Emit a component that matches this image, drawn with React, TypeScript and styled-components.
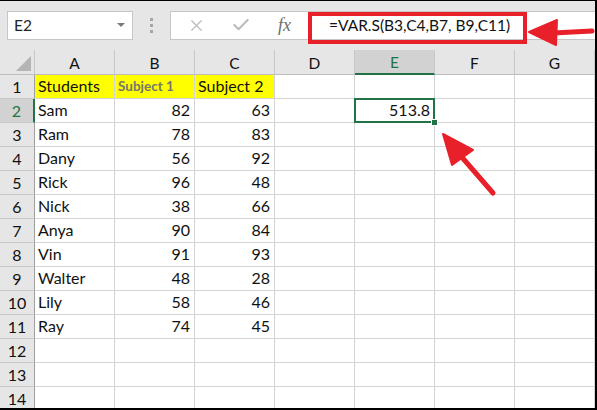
import styled, { createGlobalStyle } from 'styled-components'
import { X, Check } from 'lucide-react'

const GlobalStyle = createGlobalStyle`
  html, body {
    margin: 0;
    padding: 0;
    background: #ffffff;
  }
  body {
    font-family: Lato, 'Open Sans', sans-serif;
    overflow: hidden;
  }
`

const Window = styled.div`
  position: relative;
  width: 597px;
  height: 410px;
  box-sizing: border-box;
  border-top: 1px solid #000;
  border-right: 2px solid #000;
  border-bottom: 2px solid #000;
  background: #e6e6e6;
  overflow: hidden;
`

const Toolbar = styled.div`
  display: flex;
  align-items: center;
  height: 49px;
  padding: 9px 0 10px 7px;
  box-sizing: border-box;
`

const NameBox = styled.div`
  display: flex;
  align-items: center;
  justify-content: space-between;
  width: 126px;
  height: 29px;
  box-sizing: border-box;
  padding: 0 7px 0 6px;
  background: #fff;
  border: 1px solid #c6c6c6;
  font-size: 15.5px;
  color: #222;
`

const DropArrow = styled.span`
  width: 0;
  height: 0;
  border-left: 4px solid transparent;
  border-right: 4px solid transparent;
  border-top: 4px solid #7a7a7a;
`

const Dots = styled.div`
  display: flex;
  flex-direction: column;
  gap: 3px;
  margin: 0 17px 0 17px;
  span {
    width: 3px;
    height: 3px;
    background: #a6a6a6;
  }
`

const FormulaBar = styled.div`
  flex: 1;
  display: flex;
  align-items: center;
  height: 29px;
  box-sizing: border-box;
  background: #fff;
  border: 1px solid #c6c6c6;
  border-right: none;
  padding-left: 15px;
  color: #bcbcbc;
`

const IconSlot = styled.span`
  display: flex;
  align-items: center;
  justify-content: center;
  width: 20px;
  margin-right: 25px;
`

const Fx = styled.span`
  font-family: 'Liberation Serif', serif;
  font-style: italic;
  font-size: 18px;
  color: #6d6d6d;
  width: 20px;
  margin: 0 31px 0 2px;
`

const Formula = styled.span`
  font-size: 15.5px;
  color: #111;
`

const Sheet = styled.div`
  display: grid;
  grid-template-columns: 35px repeat(7, 80px);
  grid-auto-rows: 24px;
  grid-template-rows: 25px;
  background: #fff;
`

const Corner = styled.div`
  position: relative;
  background: #e6e6e6;
  border-right: 1px solid #c8c8c8;
  border-bottom: 1px solid #bdbdbd;
  &::after {
    content: '';
    position: absolute;
    right: 3px;
    bottom: 3px;
    width: 0;
    height: 0;
    border-left: 15px solid transparent;
    border-bottom: 15px solid #b4b4b4;
  }
`

const ColHeader = styled.div<{ $active?: boolean }>`
  display: flex;
  align-items: center;
  justify-content: center;
  box-sizing: border-box;
  background: ${p => (p.$active ? '#d2d2d2' : '#e6e6e6')};
  color: ${p => (p.$active ? '#217346' : '#111')};
  border-right: 1px solid #c8c8c8;
  border-bottom: ${p => (p.$active ? '2px solid #217346' : '1px solid #bdbdbd')};
  font-size: 15.5px;
  padding-top: 1px;
`

const RowHeader = styled.div<{ $active?: boolean }>`
  display: flex;
  align-items: center;
  justify-content: center;
  box-sizing: border-box;
  background: ${p => (p.$active ? '#d2d2d2' : '#e6e6e6')};
  color: ${p => (p.$active ? '#217346' : '#111')};
  border-right: ${p => (p.$active ? '2px solid #217346' : '1px solid #9f9f9f')};
  border-bottom: 1px solid #c8c8c8;
  font-size: 16px;
`

const Cell = styled.div<{ $align?: 'left' | 'right'; $fill?: string; $selected?: boolean }>`
  position: relative;
  display: flex;
  align-items: flex-end;
  justify-content: ${p => (p.$align === 'right' ? 'flex-end' : 'flex-start')};
  box-sizing: border-box;
  padding: 0 4px 2px 3px;
  background: ${p => p.$fill ?? '#fff'};
  border-right: 1px solid #d4d4d4;
  border-bottom: 1px solid #d4d4d4;
  font-size: 16px;
  line-height: 20px;
  color: #111;
  white-space: nowrap;
  ${p =>
    p.$selected &&
    `
    &::after {
      content: '';
      position: absolute;
      left: -1px;
      top: -1px;
      right: -1px;
      bottom: -1px;
      border: 2px solid #217346;
    }
    &::before {
      content: '';
      position: absolute;
      right: -4px;
      bottom: -4px;
      width: 5px;
      height: 5px;
      background: #217346;
      border: 1px solid #fff;
      z-index: 1;
    }
  `}
`

const Muted = styled.span`
  font-weight: 700;
  font-size: 13.5px;
  color: #76766a;
`

const Highlight = styled.div`
  position: absolute;
  left: 308px;
  top: 11px;
  width: 219px;
  height: 32px;
  box-sizing: border-box;
  border: 4px solid #e8202a;
  pointer-events: none;
`

const Overlay = styled.svg`
  position: absolute;
  left: 0;
  top: -1px;
  pointer-events: none;
`

const cols = ['A', 'B', 'C', 'D', 'E', 'F', 'G']

const data: [string, number, number][] = [
  ['Sam', 82, 63],
  ['Ram', 78, 83],
  ['Dany', 56, 92],
  ['Rick', 96, 48],
  ['Nick', 38, 66],
  ['Anya', 90, 84],
  ['Vin', 91, 93],
  ['Walter', 48, 28],
  ['Lily', 58, 46],
  ['Ray', 74, 45],
]

const YELLOW = '#ffff00'

const App = (): JSX.Element => {
  const rows: JSX.Element[] = []
  for (let r = 1; r <= 14; r++) {
    const rec = r >= 2 && r <= 11 ? data[r - 2] : null
    rows.push(<RowHeader key={`h${r}`} $active={r === 2}>{r}</RowHeader>)
    cols.forEach((c, i) => {
      const key = `${c}${r}`
      if (r === 1 && i < 3) {
        rows.push(
          <Cell key={key} $fill={YELLOW}>
            {i === 0 && 'Students'}
            {i === 1 && <Muted>Subject 1</Muted>}
            {i === 2 && 'Subject 2'}
          </Cell>
        )
      } else if (rec && i === 0) {
        rows.push(<Cell key={key}>{rec[0]}</Cell>)
      } else if (rec && (i === 1 || i === 2)) {
        rows.push(<Cell key={key} $align='right'>{rec[i]}</Cell>)
      } else if (r === 2 && c === 'E') {
        rows.push(<Cell key={key} $align='right' $selected>513.8</Cell>)
      } else {
        rows.push(<Cell key={key} />)
      }
    })
  }

  return (
    <>
      <GlobalStyle />
      <Window>
        <Toolbar>
          <NameBox>E2<DropArrow /></NameBox>
          <Dots><span /><span /><span /></Dots>
          <FormulaBar>
            <IconSlot><X size={19} strokeWidth={1.6} /></IconSlot>
            <IconSlot><Check size={20} strokeWidth={2.6} /></IconSlot>
            <Fx>fx</Fx>
            <Formula>=VAR.S(B3,C4,B7, B9,C11)</Formula>
          </FormulaBar>
        </Toolbar>
        <Sheet>
          <Corner />
          {cols.map(c => (
            <ColHeader key={c} $active={c === 'E'}>{c}</ColHeader>
          ))}
          {rows}
        </Sheet>
        <Highlight />
        <Overlay width={597} height={410} viewBox='0 0 597 410'>
          <g fill='#e8202a' stroke='#e8202a' strokeLinecap='round' strokeLinejoin='round'>
            <polygon points='529,32 557,20 556,45' strokeWidth={2} />
            <line x1={553} y1={33} x2={592} y2={31} strokeWidth={5} />
            <polygon points='443,134 473,150 452,165' strokeWidth={2} />
            <line x1={460} y1={155} x2={493} y2={193} strokeWidth={5} />
          </g>
        </Overlay>
      </Window>
    </>
  )
}

export default App
